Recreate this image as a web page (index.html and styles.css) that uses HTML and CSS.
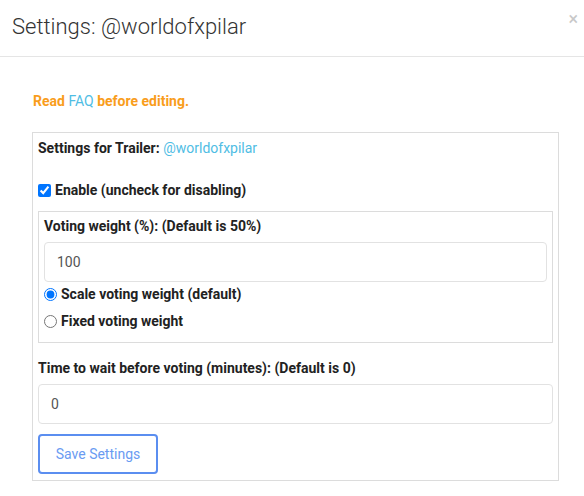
FILE: index.html
```html
<!DOCTYPE html>
<html>
<head>
<meta charset="utf-8">
<link rel="stylesheet" href="styles.css">
</head>
<body>
<div class="modal">
  <div class="modal-header">
    <h4 class="modal-title">Settings: @worldofxpilar</h4>
    <span class="close">×</span>
  </div>
  <div class="modal-body">
    <p class="notice">Read <a class="link">FAQ</a> before editing.</p>
    <div class="box">
      <div class="line strong">Settings for Trailer: <a class="link normal">@worldofxpilar</a></div>
      <label class="check-row strong"><input type="checkbox" checked> Enable (uncheck for disabling)</label>
      <div class="inner">
        <div class="line strong">Voting weight (%): (Default is 50%)</div>
        <div class="field">100</div>
        <label class="radio-row first strong"><input type="radio" name="w" checked> Scale voting weight (default)</label>
        <label class="radio-row strong"><input type="radio" name="w"> Fixed voting weight</label>
      </div>
      <div class="line strong time-label">Time to wait before voting (minutes): (Default is 0)</div>
      <div class="field">0</div>
      <button class="btn">Save Settings</button>
    </div>
  </div>
</div>
</body>
</html>
```
FILE: styles.css
```css
html, body {
  margin: 0;
  padding: 0;
  background: #fff;
}
body {
  font-family: Roboto, "Liberation Sans", sans-serif;
  font-size: 14px;
  color: #222;
}
.modal-header {
  height: 56px;
  border-bottom: 1px solid #e5e5e5;
  display: flex;
  align-items: flex-start;
  justify-content: space-between;
  padding: 0 6px 0 12px;
}
.modal-title {
  margin: 12px 0 0;
  font-size: 22px;
  font-weight: 300;
  color: #333;
  line-height: 30px;
}
.close {
  font-size: 18px;
  color: #c8c8c8;
  line-height: 20px;
  margin-top: 9px;
}
.modal-body {
  padding: 34px 25px 0 32px;
}
.notice {
  margin: 0 0 21px 1px;
  line-height: 20px;
  font-weight: 700;
  color: #f99d1c;
}
.link {
  color: #4fbde4;
  font-weight: 400;
  text-decoration: none;
}
.box {
  border: 1px solid #dcdcdc;
  padding: 5px 5px 6px;
}
.line {
  line-height: 20px;
}
.strong {
  font-weight: 700;
}
.check-row {
  display: flex;
  align-items: center;
  height: 20px;
  margin-top: 22px;
}
.check-row input {
  margin: 0 4px 0 0;
  width: 13px;
  height: 13px;
}
.inner {
  margin-top: 11px;
  border: 1px solid #dcdcdc;
  padding: 4px 5px 11px;
}
.field {
  margin-top: 6px;
  height: 38px;
  border: 1px solid #e2e2e2;
  border-radius: 4px;
  padding: 0 12px;
  line-height: 38px;
  color: #555;
  font-size: 14px;
}
.radio-row {
  display: flex;
  align-items: center;
  height: 20px;
  margin-top: 7px;
}
.radio-row.first {
  margin-top: 2px;
}
.radio-row input {
  margin: 0 4px 0 0;
  width: 13px;
  height: 13px;
}
.time-label {
  margin-top: 15px;
}
.box > .field {
  margin-top: 6px;
}
.btn {
  display: block;
  margin-top: 10px;
  width: 120px;
  height: 40px;
  background: #fff;
  border: 2px solid #5b8ef0;
  border-radius: 4px;
  color: #6a9bf2;
  font-family: Roboto, "Liberation Sans", sans-serif;
  font-size: 14px;
  padding: 0;
}
```
